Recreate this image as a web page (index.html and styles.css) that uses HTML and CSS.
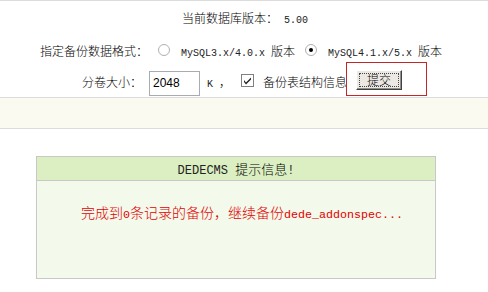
FILE: index.html
```html
<!DOCTYPE html>
<html lang="zh-CN">
<head>
  <meta charset="UTF-8" />
  <title>数据备份</title>
  <link rel="stylesheet" href="styles.css">
</head>
<body>

  <!-- Backup form -->
  <div class="form">
    <div class="row row1">当前数据库版本：<span class="en">&nbsp;5.00</span></div>
    <div class="row row2">指定备份数据格式：<span class="radio"></span><span class="en">MySQL3.x/4.0.x&nbsp;</span>版本<span class="radio on"></span><span class="en">MySQL4.1.x/5.x&nbsp;</span>版本</div>
    <div class="row row3">分卷大小：<span class="input">2048</span><span class="en">K&nbsp;</span>，<span class="check"><svg width="13" height="13" viewBox="0 0 13 13">
          <rect x="0.5" y="0.5" width="12" height="12" fill="#fff" stroke="#808080"/>
          <path d="M3 6 L5 8.5 L10 3.5 L10 5.5 L5 10.5 L3 8 Z" fill="#222"/>
        </svg></span>备份表结构信息<span class="btn-wrap"><span class="btn"><span class="focus">提交</span></span><span class="mark"></span></span></div>
  </div>

  <div class="bar"></div>

  <!-- Message box -->
  <div class="msg">
    <div class="msg-head"><span class="en">DEDECMS&nbsp;</span>提示信息<span class="en">!</span></div>
    <div class="msg-body">完成到<span class="en">0</span>条记录的备份，继续备份<span class="en">dede_addonspec...</span></div>
  </div>

</body>
</html>
```

FILE: styles.css
```css
* {
  margin: 0;
  padding: 0;
  box-sizing: border-box;
}

body {
  background: #fff;
  font-family: "Noto Sans CJK SC", sans-serif;
  font-size: 12px;
  font-weight: 300;
  color: #000;
}

.en {
  font-family: "Liberation Mono", monospace;
  font-size: 10px;
  color: #222;
}

.form {
  border-top: 1px solid #dcdcdc;
  border-bottom: 1px solid #dcdcdc;
}

.row {
  text-align: center;
  white-space: nowrap;
}

.row1 { height: 34px; line-height: 34px; padding-left: 2px; }
.row2 { height: 32px; line-height: 32px; padding-right: 6px; }
.row3 { height: 30px; line-height: 30px; padding-right: 4px; }

.radio {
  display: inline-block;
  vertical-align: middle;
  width: 12px;
  height: 12px;
  margin: -6px 11px 0 10px;
  border-radius: 50%;
  border: 1px solid #b0b0b0;
  background: #fff;
  position: relative;
}

.radio.on::after {
  content: '';
  position: absolute;
  left: 3px;
  top: 3px;
  width: 4px;
  height: 4px;
  border-radius: 50%;
  background: #000;
}

.input {
  display: inline-block;
  vertical-align: middle;
  width: 51px;
  height: 25px;
  line-height: 23px;
  margin: 0 7px 0 7px;
  padding-left: 3px;
  border: 1px solid #a5acb2;
  font-family: "Liberation Sans", sans-serif;
  font-size: 12px;
  text-align: left;
}

.check {
  display: inline-block;
  vertical-align: middle;
  height: 13px;
  line-height: 0;
  margin: -6px 9px 0 10px;
}

.btn-wrap {
  position: relative;
  display: inline-block;
  vertical-align: middle;
  margin: -7px 0 0 9px;
  line-height: 0;
}

.btn {
  display: block;
  width: 46px;
  height: 20px;
  padding: 2px;
  background: #ece9e4;
  border: 1px solid;
  border-color: #fff #404040 #404040 #fff;
  box-shadow: inset -1px -1px 0 #909090;
}

.focus {
  display: block;
  height: 14px;
  line-height: 12px;
  text-align: center;
  border: 1px dotted #444;
}

.mark {
  position: absolute;
  left: -10px;
  top: -8px;
  width: 81px;
  height: 34px;
  border: 1px solid #c0282a;
}

.bar {
  height: 31px;
  background: #fafaf0;
  border-bottom: 1px solid #dcdcdc;
}

.msg {
  width: 400px;
  margin: 27px 0 0 36px;
  border: 1px solid #c8c8c8;
  background: #f3f9eb;
}

.msg-head {
  height: 24px;
  line-height: 23px;
  text-align: center;
  background: #dbefc2;
  border-bottom: 1px solid #c8c8c8;
  font-size: 13px;
}

.msg-head .en {
  font-size: 12px;
}

.msg-body {
  height: 97px;
  padding-top: 21px;
  padding-left: 44px;
  color: #e00000;
  font-size: 14px;
  line-height: 20px;
}

.msg-body .en {
  font-size: 11.67px;
  color: #e00000;
}
```
